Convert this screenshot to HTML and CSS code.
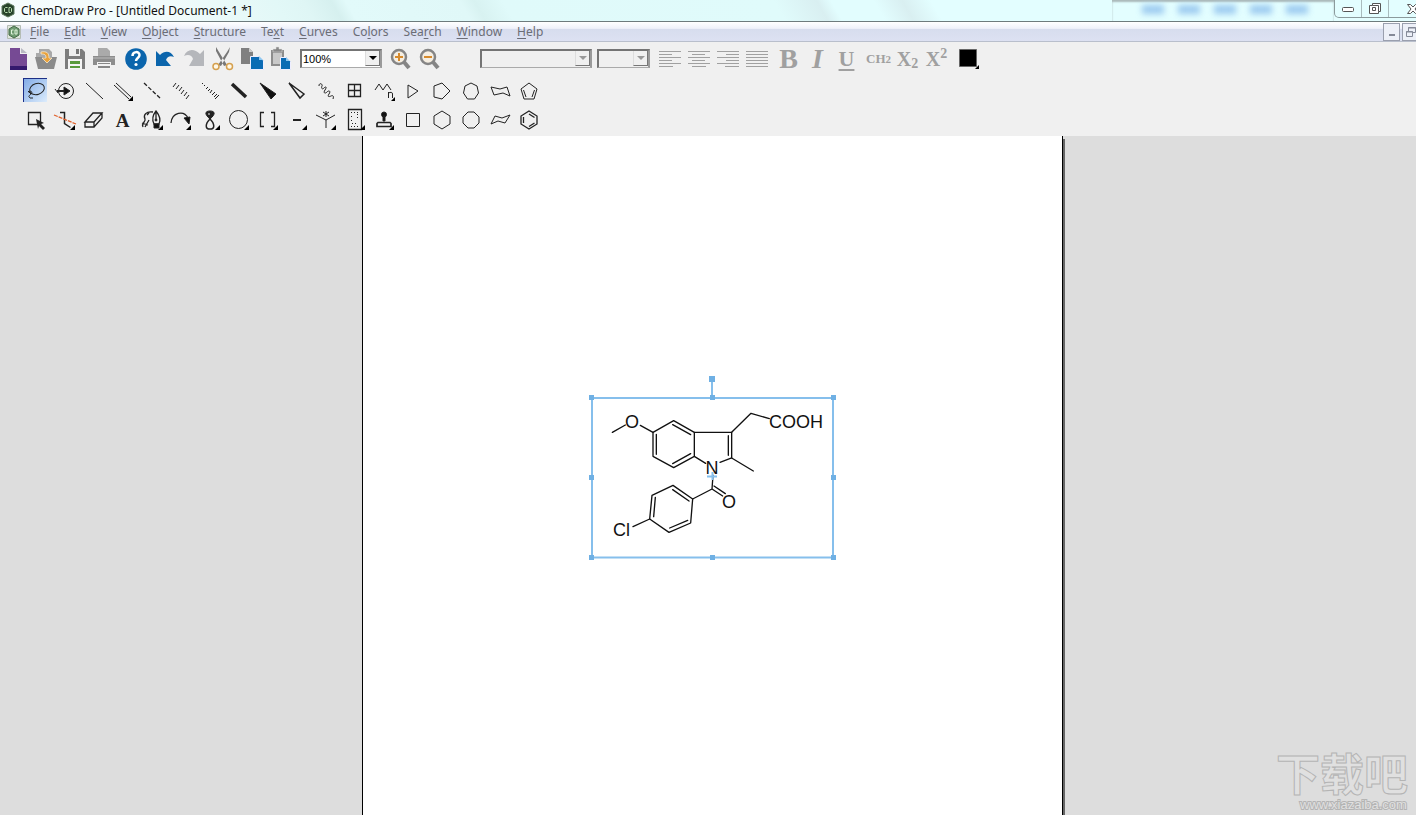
FILE: index.html
```html
<!DOCTYPE html>
<html lang="en">
<head>
    <meta charset="UTF-8">
    <meta name="viewport" content="width=device-width, initial-scale=1.0">
    <title>ChemDraw Pro</title>
    <link rel="stylesheet" href="styles.css">
</head>
<body>
    <header class="titlebar">
        <svg class="logo" width="16" height="16" viewBox="0 0 16 16"><path d="M8 1l6 3v8l-6 3-6-3V4z" fill="#27432a" stroke="#5d7a5e"/><path d="M7.500 5.500h-2l-1 1v3l1 1h2M9 5.500v5h1.500l1-1v-3l-1-1z" fill="none" stroke="#b9e0b2"/></svg>
        <h1>ChemDraw Pro - [Untitled Document-1 *]</h1>
        <div class="glass"><i></i><i></i><i></i><i></i><i></i></div>
        <div class="winButtons">
            <button aria-label="Minimize"><svg width="14" height="14" viewBox="0 0 14 14"><rect x="1.500" y="5.500" width="11" height="4" rx="1" fill="#fff" stroke="#555"/></svg></button>
            <button aria-label="Restore"><svg width="14" height="14" viewBox="0 0 14 14"><path d="M4.500 1.500h8v8h-2v2h-9v-8h3z" fill="#fff" stroke="#555"/><path d="M4.500 3.500h6v6M4.500 5.500h3v3h-3z" fill="none" stroke="#555"/></svg></button>
            <button class="close" aria-label="Close"><svg width="14" height="14" viewBox="0 0 14 14"><path d="M1.500 2.500h3l2.500 2.500 2.500-2.500h3l-3.500 4.500 3.500 4.500h-3l-2.500-2.500-2.500 2.500h-3l3.500-4.500z" fill="#fff" stroke="#555"/></svg></button>
        </div>
    </header>

    <nav class="menubar">
        <svg class="docIcon" width="16" height="16" viewBox="0 0 16 16"><path d="M1.500 1.500h13v13h-13z" fill="#dfe6dc" stroke="#b4bcb4"/><path d="M8 2l5 3v6l-5 3-5-3V5z" fill="#6f9b70" stroke="#456a48"/><path d="M7.500 6h-2v4h2M9 6v4h2V6z" fill="none" stroke="#dff3da"/></svg>
        <button><u>F</u>ile</button>
        <button><u>E</u>dit</button>
        <button><u>V</u>iew</button>
        <button><u>O</u>bject</button>
        <button><u>S</u>tructure</button>
        <button>Te<u>x</u>t</button>
        <button><u>C</u>urves</button>
        <button>Co<u>l</u>ors</button>
        <button>Sea<u>r</u>ch</button>
        <button><u>W</u>indow</button>
        <button><u>H</u>elp</button>
        <div class="docButtons">
            <button aria-label="Minimize document"><svg width="14" height="14" viewBox="0 0 14 14"><path d="M4 10h6" stroke="#858a98" stroke-width="2"/></svg></button>
            <button aria-label="Restore document"><svg width="14" height="14" viewBox="0 0 14 14"><path d="M4.500 6V2.500h7v5H9M2.500 6.500h6v5h-6zM2 7h7M4 3h8" fill="none" stroke="#858a98"/></svg></button>
        </div>
    </nav>

    <div class="toolbar">
        <button aria-label="New"><svg class="icon" viewBox="0 0 29 29"><path d="M8 4h10v6h7v12H8z" fill="#764a94"/><path d="M8 22h17v4H8z" fill="#35196d" /><path d="M19 4l6 5h-6z" fill="#b9b9c2"/></svg></button>
        <button aria-label="Open"><svg class="icon" viewBox="0 0 29 29"><path d="M5 13V9h3V5h10l3 3v5z" fill="#a9a9a9"/><path d="M4 13h22l-3 12H7z" fill="#8b8b8b"/><path d="M10 8c6-1 8 1 8 6h3l-5 5-5-5h4c0-3-1-4-5-4z" fill="#e9a23c" stroke="#fff5df" stroke-width=".7"/></svg></button>
        <button aria-label="Save"><svg class="icon" viewBox="0 0 29 29"><path d="M5 5h17l3 3v17H5z" fill="#7d7d7d"/><path d="M9 5h11v7H9z" fill="#eee"/><path d="M16 5h3v5h-3z" fill="#777"/><path d="M8 15h14v10H8z" fill="#f5f5f5"/><path d="M10 17h10v3H10zM10 22h10v2H10z" fill="#5a9b3c"/></svg></button>
        <button aria-label="Print"><svg class="icon" viewBox="0 0 29 29"><path d="M9 4h9l3 3v6H9z" fill="#aaa"/><path d="M4 12h22v9H4z" fill="#8d8d8d"/><path d="M4 14h22" stroke="#bbb"/><path d="M8 18h14v7H8z" fill="#f3f3f3"/><path d="M9 19h12v1H9zM9 22h12v2H9z" fill="#888"/></svg></button>
        <button class="help" aria-label="Help"><svg class="icon" viewBox="0 0 29 29"><circle cx="15" cy="15" r="10.800" fill="#0b65ac"/><path d="M11.500 12c0-5 7-5 7-1 0 3-3.500 3-3.500 6" fill="none" stroke="#fff" stroke-width="2.500"/><circle cx="15" cy="20.500" r="1.600" fill="#fff"/></svg></button>
        <button aria-label="Undo"><svg class="icon" viewBox="0 0 29 29"><path d="M6 7l4 4c5-5 11-4 14 2-4-2-7 0-8 3l5 6H6z" fill="#0b65ac"/></svg></button>
        <button aria-label="Redo" disabled><svg class="icon" viewBox="0 0 29 29"><path d="M25 6l-4 4c-6-6-13-5-16 2 4-2 8-1 9 3l-4 7h15z" fill="#b5b7bb"/></svg></button>
        <button aria-label="Cut"><svg class="icon" viewBox="0 0 29 29"><path d="M8 3l3 5 8 13-3 1L8 7zM22 3l-3 5-9 13 3 1 8-14z" fill="#777"/><g fill="#fff8e8" stroke="#d5a04f" stroke-width="1.500"><circle cx="8" cy="22.500" r="3"/><circle cx="21.500" cy="22.500" r="3"/></g></svg></button>
        <button aria-label="Copy"><svg class="icon" viewBox="0 0 29 29"><path d="M4 4h8l4 4v12H4z" fill="#808080"/><path d="M12 4v4h4z" fill="#ccc"/><path d="M13.500 12.500h8l5 4v9h-13z" fill="#0b6bb4" stroke="#eef"/><path d="M22 12v4h4z" fill="#8fc8f0"/></svg></button>
        <button aria-label="Paste"><svg class="icon" viewBox="0 0 29 29"><path d="M5 6h13v16H5z" fill="#8d8d8d"/><path d="M7 9h9v11H7z" fill="#c9c9c9"/><path d="M7 8V5h3V3h3v2h3v3z" fill="#888" stroke="#ddd" stroke-width=".5"/><path d="M14.500 13.500h6l4 4v8h-10z" fill="#0b6bb4" stroke="#eef"/><path d="M20 13v4h4z" fill="#8fc8f0"/></svg></button>
        <span class="combo zoomBox"><select aria-label="Zoom"><option>100%</option></select><span class="arrow"></span></span>
        <button class="zoomIn" aria-label="Zoom in"><svg class="icon" viewBox="0 0 29 29"><circle cx="13" cy="13" r="7" fill="#f5eee2" stroke="#858585" stroke-width="2.500"/><path d="M18 18l5 6" stroke="#858585" stroke-width="4"/><path d="M9 13h8M13 9v8" stroke="#d68a2c" stroke-width="2"/></svg></button>
        <button aria-label="Zoom out"><svg class="icon" viewBox="0 0 29 29"><circle cx="13" cy="13" r="7" fill="#f5eee2" stroke="#858585" stroke-width="2.500"/><path d="M18 18l5 6" stroke="#858585" stroke-width="4"/><path d="M9 13h8" stroke="#d68a2c" stroke-width="2"/></svg></button>
        <span class="combo fontBox"><select aria-label="Font" disabled><option></option></select><span class="arrow"></span></span>
        <span class="combo sizeBox"><select aria-label="Font size" disabled><option></option></select><span class="arrow"></span></span>
        <button class="alignLeft" aria-label="Align left" disabled><svg class="icon gray" viewBox="0 0 29 29"><path d="M4 7.500h22M4 10.500h13M4 13.500h22M4 16.500h13M4 19.500h22M4 22.500h14"/></svg></button>
        <button aria-label="Align center" disabled><svg class="icon gray" viewBox="0 0 29 29"><path d="M4 7.500h22M8 10.500h13M4 13.500h22M8 16.500h13M4 19.500h22M8 22.500h14"/></svg></button>
        <button aria-label="Align right" disabled><svg class="icon gray" viewBox="0 0 29 29"><path d="M4 7.500h22M13 10.500h13M4 13.500h22M13 16.500h13M4 19.500h22M12 22.500h14"/></svg></button>
        <button aria-label="Justify" disabled><svg class="icon gray" viewBox="0 0 29 29"><path d="M4 7.500h22M4 10.500h22M4 13.500h22M4 16.500h22M4 19.500h22M4 22.500h22"/></svg></button>
        <button class="letter bold" disabled>B</button>
        <button class="letter italic" disabled>I</button>
        <button class="letter under" disabled>U</button>
        <button class="script formula" disabled>CH<small>2</small></button>
        <button class="script" disabled>X<sub>2</sub></button>
        <button class="script" disabled>X<sup>2</sup></button>
        <button class="color" aria-label="Color"><svg class="icon" viewBox="0 0 29 29"><path d="M5.500 5.500h17v17h-17z" fill="#000" stroke="#666"/><path d="M25 21v4h-4z"/></svg></button>
    </div>

    <div class="palette">
        <button class="selected" aria-label="Lasso"><svg class="icon" viewBox="0 0 29 29"><ellipse cx="16" cy="12" rx="7.500" ry="5.500" transform="rotate(-18 16 12)"/><path d="M7 15c3-2 5 0 3 2s-3 2-1 4h3M7 14l3 3"/></svg></button>
        <button aria-label="Rotate"><svg class="icon" viewBox="0 0 29 29"><circle cx="16" cy="14" r="7.500"/><path d="M7 14h8" stroke-width="2"/><path d="M14 10l6 4-6 4z" fill="#111"/><path d="M5 12l3 4"/></svg></button>
        <button aria-label="Solid bond"><svg class="icon" viewBox="0 0 29 29"><path d="M7 6l17 16"/></svg></button>
        <button aria-label="Double bond"><svg class="icon" viewBox="0 0 29 29"><path d="M6 8l15 14M8 6l15 14"/><path class="more" d="M25 19v5h-5z"/></svg></button>
        <button aria-label="Dashed bond"><svg class="icon" viewBox="0 0 29 29"><path d="M7 6l17 16" stroke-width="1.300" stroke-dasharray="4 2"/></svg></button>
        <button aria-label="Hashed bond"><svg class="icon" viewBox="0 0 29 29"><path d="M7 10l3-4M10 12l3-4M13 14l3-4M15 17l3-4M18 19l3-4M20 22l3-4"/></svg></button>
        <button aria-label="Hashed wedge bond"><svg class="icon" viewBox="0 0 29 29"><path d="M7 7l1-1M9 9l1-1M11 12l2-2M13 14l2-2M15 16l2-3M17 18l3-3M19 20l3-3M20 22l4-4"/></svg></button>
        <button aria-label="Bold bond"><svg class="icon" viewBox="0 0 29 29"><path d="M8 7l14 13" stroke-width="3.500"/></svg></button>
        <button aria-label="Wedge bond"><svg class="icon" viewBox="0 0 29 29"><path d="M7 6l16 11-5 5z" fill="#111"/></svg></button>
        <button aria-label="Hollow wedge bond"><svg class="icon" viewBox="0 0 29 29"><path d="M7 6l15 11-4 4z" stroke-width="1.500"/></svg></button>
        <button aria-label="Wavy bond"><svg class="icon" viewBox="0 0 29 29"><path d="M8 9c0-4 4-2 3 0s0 4 2 2 3-1 1 2 0 4 2 2 4-1 2 2 0 3 2 2 3 0 2 3"/></svg></button>
        <button aria-label="Table"><svg class="icon" viewBox="0 0 29 29"><path d="M8.500 7.500h12v12h-12zM14.500 7.500v12M8.500 13.500h12" stroke-width="1.300"/></svg></button>
        <button aria-label="Chain"><svg class="icon" viewBox="0 0 29 29"><path d="M6 13l4-6 4 6 4-6 4 6M19.500 21v-6M19.500 16c2-1 4-1 4 1v4"/><path class="more" d="M26 20v4h-4z"/></svg></button>
        <button aria-label="Cyclopropane"><svg class="icon" viewBox="0 0 29 29"><path d="M10 8v13l10-7z"/></svg></button>
        <button aria-label="Cyclopentane"><svg class="icon" viewBox="0 0 29 29"><path d="M7 9l8-3 8 8-8 8-8-2z"/></svg></button>
        <button aria-label="Cycloheptane"><svg class="icon" viewBox="0 0 29 29"><path d="M15 6l6 3 1.500 7-4 6h-7l-4-6L9 9z"/></svg></button>
        <button aria-label="Chair"><svg class="icon" viewBox="0 0 29 29"><path d="M6 10l9 2 7-2 3 9-7-3-9 2z"/></svg></button>
        <button aria-label="Cyclopentadiene"><svg class="icon" viewBox="0 0 29 29"><path d="M15 6l8 6-3 10H10L7 12zM20.500 13l-2.500 7M9.500 13l2.500 7"/></svg></button>

        <button aria-label="Marquee"><svg class="icon" viewBox="0 0 29 29"><path d="M7.500 6.500h12v12h-12z" stroke-width="1.300"/><path d="M15 13l8 4-3 1 4 4-2 2-4-4-1 3z" fill="#222" stroke="none"/></svg></button>
        <button aria-label="Fragmentation"><svg class="icon" viewBox="0 0 29 29"><path d="M10 6.500h4.500v11l6 4" stroke-width="1.500"/><path d="M4 9l22 9" stroke="#e0602a" stroke-width="1.300" stroke-dasharray="4 1"/><path class="more" d="M25 19v5h-5z"/></svg></button>
        <button aria-label="Eraser"><svg class="icon" viewBox="0 0 29 29"><path d="M6 16l8-9h9l-8 9zM6 16v5h9v-5M15 21l8-9V7" stroke-width="1.300"/></svg></button>
        <button class="textTool" aria-label="Text">A</button>
        <button aria-label="Pen"><svg class="icon" viewBox="0 0 29 29"><path d="M16 6C9 5 6 9 8 13c1 3-4 4-2 8M5 17l6 2M12 14l-4 7M12 7l-2 2" stroke-width="1.300"/><path d="M19 5c-4 5-4 9-2 13h5c2-4 1-8-3-13zM19 6v8" stroke-width="1.300"/><path d="M17 18h5v4h-5z" fill="#111"/><circle cx="19" cy="14" r="1" fill="#111"/><path class="more" d="M26 19v5h-5z"/></svg></button>
        <button aria-label="Arc arrow"><svg class="icon" viewBox="0 0 29 29"><path d="M5 17C6 6 18 4 22 12" stroke-width="1.300"/><path d="M18 12l6-1-1 7z" fill="#111"/><path class="more" d="M25 19v5h-5z"/></svg></button>
        <button aria-label="Orbital"><svg class="icon" viewBox="0 0 29 29"><path d="M15 13c-6-5-5-8 0-8s6 3 0 8z" fill="#222"/><path d="M15 13c-5 5-5 10 0 10s5-5 0-10z" stroke-width="1.500"/><circle cx="14" cy="8" r="1" fill="#aaa" stroke="none"/><path class="more" d="M25 19v5h-5z"/></svg></button>
        <button aria-label="Circle"><svg class="icon" viewBox="0 0 29 29"><circle cx="14.500" cy="13.500" r="9"/><path class="more" d="M25 19v5h-5z"/></svg></button>
        <button aria-label="Brackets"><svg class="icon" viewBox="0 0 29 29"><path d="M11 6.500H7.500v14H11M18 6.500h3.500v14H18" stroke-width="1.300"/><path class="more" d="M25 19v5h-5z"/></svg></button>
        <button aria-label="Symbol"><svg class="icon" viewBox="0 0 29 29"><path d="M11 14h8" stroke-width="2"/><path class="more" d="M25 19v5h-5z"/></svg></button>
        <button aria-label="Query"><svg class="icon" viewBox="0 0 29 29"><path d="M5 9l10 5 9-5M15 14v8M15 5v6M12 6l6 4M12 10l6-4"/><path class="more" d="M25 19v5h-5z"/></svg></button>
        <button aria-label="Plate"><svg class="icon" viewBox="0 0 29 29"><path d="M8.500 3.500h13v20h-13z" stroke-width="1.300"/><path d="M11 6.500h9M11 20.500h9M11 10.500h3M11 14.500h3M17 11.500h3M12 17.500h6M17 8.500h3" stroke-dasharray="1 2"/><path class="more" d="M25 19v5h-5z"/></svg></button>
        <button aria-label="Template"><svg class="icon" viewBox="0 0 29 29"><circle cx="15" cy="8.500" r="2.500" fill="#111"/><path d="M14 10h2v5h-2z" fill="#111"/><path d="M9 16.500h12l1 1v3H8v-3z" stroke-width="1.700"/><path class="more" d="M25 19v5h-5z"/></svg></button>
        <button aria-label="Cyclobutane"><svg class="icon" viewBox="0 0 29 29"><path d="M8.500 7.500h13v13h-13z"/></svg></button>
        <button aria-label="Cyclohexane"><svg class="icon" viewBox="0 0 29 29"><path d="M15 5l8 5v8l-8 5-8-5v-8z"/></svg></button>
        <button aria-label="Cyclooctane"><svg class="icon" viewBox="0 0 29 29"><path d="M12 6h6l5 5v6l-5 5h-6l-5-5v-6z"/></svg></button>
        <button aria-label="Boat"><svg class="icon" viewBox="0 0 29 29"><path d="M6 18l4-8 7 2 8-3-5 8-7-2z"/></svg></button>
        <button aria-label="Benzene"><svg class="icon" viewBox="0 0 29 29"><path d="M15 5l8 5v8l-8 5-8-5v-8zM15 8l5.500 3.500M20.500 17L15 20.500M9.500 11v6" stroke-width="1.300"/></svg></button>
    </div>

    <main class="workspace">
        <div class="page">
            <svg class="molecule" width="264" height="196" viewBox="0 0 264 196">
                <g class="bonds" transform="scale(.33333)">
                    <path d="M97 187l39-22M181 166l38 21"/>
                    <path d="M219 187l62-35 62 35v72l-62 34-62-34z"/>
                    <path d="M278 164l54 30M229 193v60M278 281l54-30"/>
                    <path d="M343 187h112v77l-35 13M343 259l34 21M445 197v59"/>
                    <path d="M455 187l58-57 55 16M455 264l65 39"/>
                    <path d="M399 316l-3 41 32 21M402 348l34 23M396 357l-58 30"/>
                    <path d="M338 387l-59-41-63 30-7 71 58 40 65-28z"/>
                    <path d="M278 359l49 34M226 382l-5 58M269 474l54-23"/>
                    <path d="M209 447l-50 23"/>
                </g>
                <g class="atoms">
                    <text x="52" y="58" text-anchor="middle">O</text>
                    <text x="189" y="58">COOH</text>
                    <text x="132" y="104" text-anchor="middle">N</text>
                    <text x="149" y="138" text-anchor="middle">O</text>
                    <text x="33" y="166">Cl</text>
                </g>
                <g class="selection">
                    <path d="M12 28h241v159.500H12zM132 9v19M127 106.500h10M132.500 102v8" fill="none"/>
                    <path d="M9 25h5v5H9zM130 25h5v5h-5zM251 25h5v5h-5zM9 105h5v5H9zM251 105h5v5h-5zM9 185h5v5H9zM130 185h5v5h-5zM251 185h5v5h-5zM129 6h6v6h-6z" stroke="none"/>
                </g>
            </svg>
        </div>
        <svg class="watermark" width="142" height="80" viewBox="0 0 142 80">
            <text class="brand" x="2" y="56">下载吧</text>
            <text class="site" x="26" y="74">www.xiazaiba.com</text>
        </svg>
    </main>
</body>
</html>
```

FILE: styles.css
```css
*{
    box-sizing: border-box;
}
body{
    margin: 0;
    min-height: 100vh;
    display: flex;
    flex-direction: column;
    background-color: #f0f0f0;
    font-family: "Noto Sans", sans-serif;
    font-size: 12px;
    overflow-x: hidden;
}
button{
    margin: 0;
    padding: 0;
    border: 0;
    background: none;
    font-family: inherit;
}

.titlebar{
    display: flex;
    height: 22px;
    overflow: hidden;
    border-bottom: 1px solid #6e7b7d;
    background: linear-gradient(60deg, #f6fdfd 0%, #f1fbfb 12%, #e2f8f7 20%, #dff6f5 22%, #d6f0ef 24%, #e2fafa 25%, #e0f8f8 33%, #d8f2f1 34%, #e0fafa 36%, #e0fbfb 55%, #d9eff1 58%, #e2fdfe 59%, #e2fdfe 62%, #d9eff1 64%, #e3feff 66%, #e3feff 100%);
}
.logo{
    margin-top: 2px;
}
.titlebar h1{
    flex: 1;
    margin: 0 0 0 5px;
    font-size: 12px;
    font-weight: normal;
    line-height: 21px;
    color: #111;
    white-space: nowrap;
}
.glass{
    display: flex;
    gap: 14px;
    padding: 5px 26px 0 30px;
    box-shadow: inset 0 2px 2px #aab9ba;
}
.glass i{
    width: 22px;
    height: 9px;
    background-color: #9ccaf0;
    filter: blur(3px);
}
.winButtons{
    display: flex;
    height: 18px;
    margin-right: -21px;
    border: 1px solid #8b9a9c;
    border-top: 0;
    border-radius: 0 0 5px 5px;
}
.winButtons button{
    display: flex;
    justify-content: center;
    align-items: center;
    width: 27px;
    border-right: 1px solid #a9bcbe;
}
.winButtons .close{
    width: 47px;
    border-right: 0;
}

.menubar{
    display: flex;
    gap: 1px;
    align-items: center;
    height: 20px;
    overflow: hidden;
    border-bottom: 1px solid #b9bfcc;
    background: linear-gradient(#fff 0%, #eff1fa 34%, #d7ddee 36%, #dde1f2 100%);
}
.docIcon{
    margin: 0 0 0 6px;
}
.menubar button{
    padding: 0 7px;
    font-size: 12px;
    line-height: 18px;
    color: #6b6d76;
}
.menubar u{
    text-underline-offset: 2px;
}
.docButtons{
    display: flex;
    gap: 2px;
    margin: 0 -3px 0 auto;
}
.menubar .docButtons button{
    display: flex;
    justify-content: center;
    align-items: center;
    width: 17px;
    height: 18px;
    padding: 0;
    border: 1px solid #9a9fae;
    background-color: #edf0f8;
}

.toolbar{
    display: flex;
    align-items: center;
    height: 33px;
    padding: 0 0 0 2px;
}
.toolbar button{
    flex: none;
    width: 29px;
    height: 29px;
}
.icon{
    display: block;
    width: 29px;
    height: 29px;
}
.gray{
    stroke: #a0a0a0;
}
.toolbar .help{
    margin-left: 3px;
}
.combo{
    position: relative;
    height: 19px;
    border: 2px solid #747474;
    border-right-color: #9a9a9a;
    border-bottom: 1px solid #aaa;
}
.combo select{
    display: block;
    width: 100%;
    height: 16px;
    padding: 0 0 0 1px;
    border: 0;
    border-radius: 0;
    background-color: #fff;
    appearance: none;
    color: #000;
    font-family: "Liberation Sans", sans-serif;
    font-size: 11px;
}
.combo select:disabled{
    background-color: #f0f0f0;
}
.arrow{
    position: absolute;
    top: 0;
    right: 0;
    display: flex;
    justify-content: center;
    align-items: center;
    width: 15px;
    height: 15px;
    border-right: 1px solid #777;
    border-bottom: 1px solid #777;
    border-left: 1px solid #ddd;
    background-color: #f0f0f0;
    pointer-events: none;
}
.arrow::after{
    content: "";
    border: 4px solid transparent;
    border-top-color: #000;
    border-bottom: 0;
}
select:disabled + .arrow::after{
    border-top-color: #999;
}
.zoomBox{
    width: 82px;
    margin-left: 5px;
}
.toolbar .zoomIn{
    margin-left: 4px;
}
.fontBox{
    width: 112px;
    margin-left: 36px;
}
.sizeBox{
    width: 53px;
    margin-left: 5px;
}
.toolbar .alignLeft{
    margin-left: 5px;
}
.toolbar .letter{
    color: #a0a0a0;
    font-family: "Liberation Serif", serif;
    font-size: 28px;
    font-weight: bold;
    line-height: 29px;
}
.toolbar .bold{
    margin-left: 3px;
}
.toolbar .italic{
    font-style: italic;
}
.toolbar .under{
    font-size: 22px;
    text-decoration: underline;
    text-decoration-thickness: 2px;
    text-underline-offset: 3px;
    line-height: 24px;
}
.toolbar .script{
    color: #a0a0a0;
    font-family: "Liberation Serif", serif;
    font-size: 20px;
    font-weight: bold;
    line-height: 20px;
    white-space: nowrap;
}
.toolbar .formula{
    margin-left: 3px;
    font-size: 13px;
}
.formula small{
    font-size: 11px;
}
.script sub, .script sup{
    font-size: 14px;
    line-height: 0;
}
.script sub{
    vertical-align: -2px;
}
.toolbar .color{
    margin-left: 3px;
}

.palette{
    display: grid;
    grid-template-columns: repeat(18, 29px);
    grid-auto-rows: 29px;
    padding: 2px 0 1px 21px;
}
.palette .icon{
    fill: none;
    stroke: #222;
}
.palette .more{
    fill: #000;
    stroke: none;
}
.palette .selected{
    background: linear-gradient(135deg, #7fa9e6, #dcecfc) no-repeat 2px 1px / 24px 24px;
}
.selected .icon{
    background: linear-gradient(#1d2f86, #1d2f86) no-repeat 2px 1px / 24px 1px, linear-gradient(#1d2f86, #1d2f86) no-repeat 2px 1px / 1px 24px;
}
.textTool{
    font-family: "Liberation Serif", serif;
    font-size: 19px;
    font-weight: bold;
    color: #222;
}

.workspace{
    position: relative;
    flex: 1;
    display: flex;
    justify-content: center;
    padding-left: 9px;
    background-color: #ddd;
}
.page{
    position: relative;
    width: 701px;
    border-left: 1px solid #000;
    border-right: 1px solid #000;
    background-color: #fff;
    box-shadow: 2px 3px 0 #666;
}
.molecule{
    position: absolute;
    left: 217px;
    top: 234px;
}
.bonds{
    fill: none;
    stroke: #111;
    stroke-width: 4;
    stroke-linecap: round;
    stroke-linejoin: round;
}
.atoms{
    fill: #111;
    font-family: "Liberation Sans", sans-serif;
    font-size: 18px;
}
.selection{
    fill: #6fb0e4;
    stroke: #86bfec;
    stroke-width: 2;
}
.watermark{
    position: absolute;
    right: 0;
    bottom: 0;
    fill: #e0e0e0;
    stroke: #b4b4b4;
}
.brand{
    font-family: "Noto Sans CJK SC", sans-serif;
    font-size: 44px;
    font-weight: bold;
}
.site{
    font-family: "Liberation Sans", sans-serif;
    font-size: 13px;
    stroke-width: 2;
    paint-order: stroke;
}
```
